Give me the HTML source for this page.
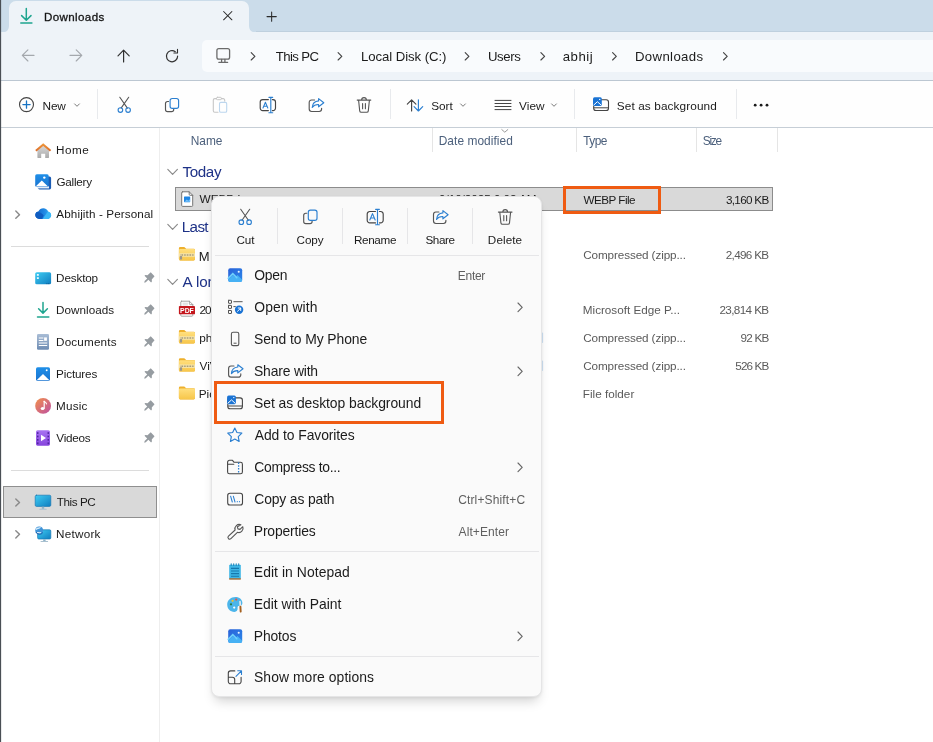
<!DOCTYPE html>
<html>
<head>
<meta charset="utf-8">
<title>Downloads</title>
<style>
*{box-sizing:border-box;margin:0;padding:0}
html,body{width:933px;height:742px;overflow:hidden;background:#fff}
body{font-family:"Liberation Sans",sans-serif;color:#1b1b1b;position:relative;-webkit-font-smoothing:antialiased}
.abs{position:absolute}
.t{position:absolute;white-space:nowrap;line-height:1}
svg{position:absolute;overflow:visible}
/* title bar */
#titlebar{left:0;top:0;width:933px;height:32px;background:#cbdcea}
#tab{left:9px;top:1px;width:240px;height:31px;background:#eef3f8;border-radius:7px 7px 0 0}
#tabl{left:3px;top:26px;width:6px;height:6px;background:radial-gradient(circle at 0 0,rgba(0,0,0,0) 6px,#eef3f8 6.5px)}
#tabr{left:249px;top:26px;width:6px;height:6px;background:radial-gradient(circle at 100% 0,rgba(0,0,0,0) 6px,#eef3f8 6.5px)}
#navbar{left:0;top:32px;width:933px;height:48px;background:#eef3f8}
#addr{left:202px;top:40px;width:740px;height:32px;background:#f9fbfd;border-radius:5px}
#line1{left:0;top:80px;width:933px;height:1px;background:#bcc7d2}
#toolbar{left:0;top:81px;width:933px;height:46px;background:#fefefe}
#line2{left:0;top:127px;width:933px;height:1px;background:#c6ced6}
#leftedge{left:0;top:0;width:1px;height:742px;background:#4a4f55}
#leftedge2{left:1px;top:0;width:1px;height:742px;background:rgba(90,96,104,.14)}
.vsep{position:absolute;width:1px;background:#e8eaed}
.bc{font-size:13.2px;top:50px;color:#1b1b1b}
.tb{font-size:11.8px;top:100.5px;color:#1b1b1b}
.sb{font-size:11.7px;left:56.5px;color:#1b1b1b}
.hd{font-size:11.9px;top:135.5px;color:#4c607c}
.gp{font-size:15.2px;color:#1e3287;left:182px}
.fn{font-size:11.8px;left:199px;color:#1b1b1b}
.ty{font-size:11.7px;left:583px;color:#5a5a5a}
.sz{font-size:11.7px;color:#5a5a5a;text-align:right;right:164.5px}
.hsep{position:absolute;left:11px;width:138px;height:1px;background:#dcdcdc}
/* menu */
#menu{left:211px;top:196px;width:330.5px;height:500.5px;background:#fafafa;border-radius:8px;border:1px solid #e5e5e6;box-shadow:0 8px 12px -4px rgba(0,0,0,.18),0 1px 3px rgba(0,0,0,.06)}
.mi{font-size:13.9px;left:254px;color:#1b1b1b}
.mk{font-size:12px;left:458px;color:#5f5f5f}
.ml{font-size:11.7px;color:#1b1b1b;text-align:center;width:65px;top:234px}
.msep{position:absolute;left:214.5px;width:324px;height:1px;background:#e6e6e8}
.obox{position:absolute;border:3px solid #ef5b12}
</style>
</head>
<body>
<div id="root" style="position:absolute;left:0;top:0;width:933px;height:742px;will-change:transform;background:#fff">
<!-- chrome -->
<div id="titlebar" class="abs"></div>
<svg class="full" width="933" height="742" viewBox="0 0 933 742" style="left:0;top:0"><path d="M2 32.500c4.500 0 7-2.500 7-7v-17.500a7 7 0 0 1 7-7h226a7 7 0 0 1 7 7v17.500c0 4.500 2.500 7 7 7z" fill="#eef3f8"/></svg>
<div class="abs" style="left:256px;top:31px;width:677px;height:1px;background:#bfd0de"></div>
<div id="navbar" class="abs"></div>
<div id="addr" class="abs"></div>
<div id="line1" class="abs"></div>
<div id="toolbar" class="abs"></div>
<div id="line2" class="abs"></div>

<!-- TAB -->
<div class="t" style="left:43.9px;top:11px;font-size:11.6px;color:#151515;-webkit-text-stroke:0.3px #151515;letter-spacing:0.380px">Downloads</div>

<!-- BREADCRUMB TEXT -->
<div class="t bc" style="left:275.7px;letter-spacing:-0.584px">This PC</div>
<div class="t bc" style="left:360.9px;letter-spacing:-0.062px">Local Disk (C:)</div>
<div class="t bc" style="left:488.0px;letter-spacing:-0.409px">Users</div>
<div class="t bc" style="left:562.8px;letter-spacing:0.481px">abhij</div>
<div class="t bc" style="left:634.9px;letter-spacing:0.369px">Downloads</div>

<!-- TOOLBAR TEXT -->
<div class="t tb" style="left:42.6px;letter-spacing:-0.155px">New</div>
<div class="t tb" style="left:431.2px;letter-spacing:-0.047px">Sort</div>
<div class="t tb" style="left:519.1px;letter-spacing:0.014px">View</div>
<div class="t tb" style="left:616.8px;letter-spacing:0.102px">Set as background</div>
<div class="vsep" style="left:97px;top:89px;height:30px"></div>
<div class="vsep" style="left:390px;top:89px;height:30px"></div>
<div class="vsep" style="left:574px;top:89px;height:30px"></div>
<div class="vsep" style="left:736px;top:89px;height:30px"></div>

<!-- SIDEBAR -->
<div class="abs" style="left:159px;top:128px;width:1px;height:614px;background:#eeeeee"></div>
<div class="t sb" style="left:56.1px;top:144px;letter-spacing:0.471px">Home</div>
<div class="t sb" style="left:56.5px;top:176px;letter-spacing:-0.255px">Gallery</div>
<div class="t sb" style="left:56.3px;top:208px;letter-spacing:0.113px">Abhijith - Personal</div>
<div class="hsep" style="top:246px"></div>
<div class="t sb" style="left:56.1px;top:272px;letter-spacing:-0.148px">Desktop</div>
<div class="t sb" style="left:56.1px;top:304px;letter-spacing:0.021px">Downloads</div>
<div class="t sb" style="left:56.1px;top:336px;letter-spacing:0.159px">Documents</div>
<div class="t sb" style="left:56.1px;top:368px;letter-spacing:-0.148px">Pictures</div>
<div class="t sb" style="left:56.1px;top:400px;letter-spacing:0.167px">Music</div>
<div class="t sb" style="left:56.3px;top:432px;letter-spacing:-0.246px">Videos</div>
<div class="hsep" style="top:470px"></div>
<div class="abs" style="left:3px;top:486px;width:154px;height:32px;background:#d9d9d9;border:1px solid #8f8f8f"></div>
<div class="t sb" style="left:56.7px;top:496px;letter-spacing:-0.413px">This PC</div>
<div class="t sb" style="left:56.1px;top:528px;letter-spacing:0.237px">Network</div>

<!-- FILE LIST -->
<div class="t hd" style="left:190.8px;letter-spacing:-0.040px">Name</div>
<div class="t hd" style="left:438.7px;letter-spacing:0.069px">Date modified</div>
<div class="t hd" style="left:583.3px;letter-spacing:-0.594px">Type</div>
<div class="t hd" style="left:702.7px;letter-spacing:-1.214px">Size</div>
<div class="vsep" style="left:432px;top:128px;height:24px;background:#e5e5e5"></div>
<div class="vsep" style="left:576px;top:128px;height:24px;background:#e5e5e5"></div>
<div class="vsep" style="left:696px;top:128px;height:24px;background:#e5e5e5"></div>
<div class="vsep" style="left:776.5px;top:128px;height:24px;background:#e5e5e5"></div>

<div class="t gp" style="left:182.4px;top:163.5px;letter-spacing:-0.358px">Today</div>
<div class="abs" style="left:175px;top:187px;width:598px;height:24px;background:#d9d9d9;border:1px solid #8c8c8c"></div>
<div class="t fn" style="left:199.5px;top:194px">WEBP Image</div>
<div class="t" style="left:439px;top:192.5px;font-size:11.7px;color:#1b1b1b;letter-spacing:-0.033px">9/10/2025 9:02 AM</div>
<div class="t ty" style="left:583.6px;top:193.5px;color:#1b1b1b;letter-spacing:-0.537px">WEBP File</div>
<div class="t sz" style="top:193.5px;color:#1b1b1b;letter-spacing:-0.699px">3,160 KB</div>

<div class="t gp" style="left:181.7px;top:218.5px;letter-spacing:-0.6px">Last week</div>
<div class="t fn" style="left:198.8px;top:249.5px;font-size:13px;letter-spacing:3.5px">Main</div>
<div class="t ty" style="left:583.2px;top:248.5px;letter-spacing:-0.099px">Compressed (zipp...</div>
<div class="t sz" style="top:248.5px;letter-spacing:-0.671px">2,496 KB</div>

<div class="t gp" style="left:182.6px;top:273.5px;letter-spacing:-0.1px">A long time ago</div>
<div class="t fn" style="left:199.4px;top:304.5px;letter-spacing:-1px">2024</div>
<div class="t ty" style="left:582.8px;top:304px">Microsoft Edge P...</div>
<div class="t sz" style="top:304px;letter-spacing:-0.612px">23,814 KB</div>
<div class="t fn" style="left:199.2px;top:332.5px">photos</div>
<div class="t ty" style="left:583.2px;top:332px;letter-spacing:-0.099px">Compressed (zipp...</div>
<div class="t sz" style="top:332px;letter-spacing:-0.786px">92 KB</div>
<div class="t fn" style="left:199.5px;top:360.5px">ViVeTool</div>
<div class="t ty" style="left:583.2px;top:360px;letter-spacing:-0.099px">Compressed (zipp...</div>
<div class="t sz" style="top:360px;letter-spacing:-0.849px">526 KB</div>
<div class="t fn" style="left:198.7px;top:388.5px">Pictures</div>
<div class="t ty" style="left:582.8px;top:388px;letter-spacing:0.017px">File folder</div>

<!-- ICONS-CHROME -->
<svg class="full" width="933" height="742" viewBox="0 0 933 742" style="left:0;top:0" fill="none" stroke-linecap="round" stroke-linejoin="round">
<!-- tab icon -->
<g stroke="#1fa58f" stroke-width="1.5"><path d="M26.3 8.6V20M21.6 15.6l4.7 4.7 4.7-4.7M20.8 23.1h11.1"/></g>
<g stroke="#2b2b2b" stroke-width="1.05"><path d="M223.6 11.5l8.3 8.3M231.9 11.5l-8.3 8.3"/><path d="M267 16.6h9.3M271.65 11.9v9.4"/></g>
<!-- nav -->
<g stroke="#a4a8ad" stroke-width="1.15"><path d="M34 55.4H22.4M27.9 49.8l-5.6 5.6 5.6 5.6"/><path d="M70 55.4h11.7M76.2 49.8l5.6 5.6-5.6 5.6"/></g>
<g stroke="#303030" stroke-width="1.2"><path d="M123.6 62V50.2M118 55.8l5.6-5.6 5.6 5.6"/>
<path d="M177.6 56.2a5.6 5.6 0 1 1-2.3-4.55"/><path d="M177.5 49.4v3.6h-3.6" stroke-width="1.1"/></g>
<g stroke="#6b6b6b" stroke-width="1.3"><rect x="216.9" y="48.7" width="12.7" height="10.4" rx="1.9"/><path d="M218.900 62.400h8.700M221.600 59.300v3M224.900 59.300v3"/></g>
<g stroke="#444" stroke-width="1.15"><path d="M251.2 52.6l3.7 3.7-3.7 3.7"/><path d="M338.09999999999997 52.6l3.7 3.7-3.7 3.7"/><path d="M465.2 52.6l3.7 3.7-3.7 3.7"/><path d="M540.9000000000001 52.6l3.7 3.7-3.7 3.7"/><path d="M612.6 52.6l3.7 3.7-3.7 3.7"/><path d="M723.5 52.6l3.7 3.7-3.7 3.7"/></g>
<!-- toolbar -->
<circle cx="26.5" cy="104.6" r="7" stroke="#444" stroke-width="1.1"/>
<path d="M22.9 104.6h7.2M26.5 101v7.2" stroke="#1773c4" stroke-width="1.3"/>
<g stroke="#7a7a7a" stroke-width="1"><path d="M74.6 103.9l2.4 2.4 2.4-2.4"/><path d="M460.6 103.9l2.4 2.4 2.4-2.4"/><path d="M551.6 103.9l2.4 2.4 2.4-2.4"/></g>
<!-- cut -->
<path d="M119.8 97.3l7.6 10.8M128.7 97.3l-7.6 10.8" stroke="#555" stroke-width="1.1"/>
<circle cx="120.4" cy="110.1" r="2.3" stroke="#2b7fd0" stroke-width="1.1"/><circle cx="128.1" cy="110.1" r="2.3" stroke="#2b7fd0" stroke-width="1.1"/>
<!-- copy -->
<path d="M168.6 101.5h-1a2.1 2.1 0 0 0-2.1 2.1v5.9a2.1 2.1 0 0 0 2.1 2.1h4a2.1 2.1 0 0 0 2.1-2.1v-.6" stroke="#555" stroke-width="1.15"/>
<rect x="170.1" y="98.5" width="8.5" height="9.9" rx="2.1" stroke="#2b7fd0" stroke-width="1.15"/>
<!-- paste disabled -->
<path d="M218 112.2h-3.2a1.5 1.5 0 0 1-1.5-1.5v-10.6a1.5 1.5 0 0 1 1.5-1.5h1.6M221.4 98.6h1.8a1.5 1.5 0 0 1 1.5 1.5v1" stroke="#c6c6c6" stroke-width="1.1"/>
<rect x="216.4" y="97.3" width="5" height="2.4" rx="1.1" stroke="#c6c6c6" stroke-width="1"/>
<rect x="219.5" y="102.4" width="7.2" height="9.8" rx="1.3" stroke="#bcd6ee" stroke-width="1.1"/>
<!-- rename -->
<path d="M268.4 99.6h-5.7a2.5 2.5 0 0 0-2.5 2.5v6a2.5 2.5 0 0 0 2.5 2.5h5.7M272.4 99.6h.6a2.5 2.5 0 0 1 2.5 2.5v6a2.5 2.5 0 0 1-2.5 2.5h-.6" stroke="#444" stroke-width="1.15"/>
<path d="M270.800 97.400v15.200M268.900 97.300h3.800M268.900 112.700h3.800" stroke="#2b7fd0" stroke-width="1.15"/>
<path d="M263 108l2.4-5.8 2.4 5.8M263.8 106.2h3.2" stroke="#2b7fd0" stroke-width="1.05"/>
<!-- share -->
<path d="M314.6 100h-3a2.4 2.4 0 0 0-2.4 2.4v6.7a2.4 2.4 0 0 0 2.4 2.4h7.6a2.4 2.4 0 0 0 2.4-2.4v-.9" stroke="#555" stroke-width="1.15"/>
<path d="M318.6 98.6l5.2 4.1-5.2 4.1v-2.3c-3-.1-5 .9-6.4 3 .3-3.7 2.6-6.3 6.4-6.6z" stroke="#2b7fd0" stroke-width="1.1"/>
<!-- delete -->
<path d="M357.2 100.1h13.6M361.6 100a2.4 2.4 0 0 1 4.8 0M358.6 100.3l1.1 10.6a1.6 1.6 0 0 0 1.6 1.4h5.4a1.6 1.6 0 0 0 1.6-1.4l1.1-10.6M362.6 103.6v5.2M365.4 103.6v5.2" stroke="#555" stroke-width="1.1"/>
<!-- sort -->
<path d="M411.6 111V100M407.3 104.2l4.3-4.3 4.3 4.3" stroke="#444" stroke-width="1.15"/>
<path d="M418.4 99.8v11M414.1 106.7l4.3 4.3 4.3-4.3" stroke="#2b7fd0" stroke-width="1.15"/>
<!-- view -->
<path d="M495 100.4h16M495 103.5h16M495 106.5h16M495 109.6h16" stroke="#444" stroke-width="1"/>
<!-- set as bg -->
<rect x="593.7" y="99.7" width="14.8" height="10.8" rx="2.3" stroke="#444" stroke-width="1.1"/>
<path d="M594 107.8h14.3" stroke="#444" stroke-width="1"/>
<rect x="593" y="97.2" width="8.8" height="8.8" rx="1.5" fill="#1a73d4"/>
<path d="M593.8 105l3.6-3.3 3.6 3.3" stroke="#fff" stroke-width="1"/><circle cx="599.7" cy="99.4" r=".7" fill="#fff"/>
<!-- dots -->
<g fill="#1b1b1b"><circle cx="755.2" cy="105.2" r="1.4"/><circle cx="761.1" cy="105.2" r="1.4"/><circle cx="767" cy="105.2" r="1.4"/></g>
</svg>

<!-- ICONS-SIDEBAR -->
<svg class="full" width="933" height="742" viewBox="0 0 933 742" style="left:0;top:0" fill="none" stroke-linecap="round" stroke-linejoin="round">
<defs>
<linearGradient id="gTeal" x1="0" y1="0" x2="1" y2="1"><stop offset="0" stop-color="#3fcdf3"/><stop offset="1" stop-color="#0f7dc0"/></linearGradient>
<linearGradient id="gBlue" x1="0" y1="0" x2="0" y2="1"><stop offset="0" stop-color="#1f8fe8"/><stop offset="1" stop-color="#1a74d0"/></linearGradient>
<linearGradient id="gMus" x1="0" y1="0" x2="1" y2="1"><stop offset="0" stop-color="#f3914a"/><stop offset="1" stop-color="#bd4fa3"/></linearGradient>
<linearGradient id="gVid" x1="0" y1="0" x2="0" y2="1"><stop offset="0" stop-color="#a873f2"/><stop offset="1" stop-color="#8644dc"/></linearGradient>
<linearGradient id="gDoc" x1="0" y1="0" x2="0" y2="1"><stop offset="0" stop-color="#a9bdd6"/><stop offset="1" stop-color="#6e8cb3"/></linearGradient>
<linearGradient id="gHome" x1="0" y1="0" x2="0" y2="1"><stop offset="0" stop-color="#d8d8d8"/><stop offset="1" stop-color="#a9a9a9"/></linearGradient>
<linearGradient id="gRoof" x1="0" y1="0" x2="0" y2="1"><stop offset="0" stop-color="#f09a3c"/><stop offset="1" stop-color="#d96a2a"/></linearGradient>
<linearGradient id="gCloud" x1="0" y1="0" x2="1" y2="0"><stop offset="0" stop-color="#0f62c4"/><stop offset=".55" stop-color="#1e86e3"/><stop offset="1" stop-color="#35b2f2"/></linearGradient>
</defs>
<!-- home -->
<path d="M37.4 150.6l5.8-4.9 5.8 4.9v6.6a.9.9 0 0 1-.9.9h-2.9v-4.4h-4v4.4h-2.9a.9.9 0 0 1-.9-.9z" fill="url(#gHome)"/>
<path d="M43.2 143.2l-8 6.9 1.3 1.5 6.7-5.7 6.7 5.7 1.3-1.5z" fill="url(#gRoof)"/>
<!-- gallery -->
<rect x="38" y="176.4" width="13.1" height="13" rx="1.6" fill="#1b5cb4"/>
<path d="M37.2 186.2h11.8v2.2h-11.8z" fill="#e3ecf8"/>
<rect x="35.2" y="174.3" width="13.5" height="12.6" rx="1.6" fill="url(#gBlue)"/>
<path d="M35.6 186.5l6.2-6 6.2 6z" fill="#fff"/><circle cx="44.300" cy="177.600" r="1.200" fill="#fff"/>
<!-- onedrive -->
<path d="M39.3 218.9c-2.3 0-4-1.7-4-3.8 0-2 1.4-3.5 3.2-3.8.9-1.8 2.7-3 4.8-3 2.3 0 4.200 1.400 4.900 3.400 1.700.400 2.900 1.800 2.900 3.500 0 2-1.600 3.700-3.600 3.700z" fill="url(#gCloud)"/>
<path d="M42.600 218.900l5.300-7.400c1.900.300 3.200 1.800 3.200 3.700 0 2-1.600 3.700-3.600 3.700z" fill="#3bb8f6"/>
<path d="M39.300 218.900c-2.300 0-4-1.700-4-3.800 0-1.300.6-2.400 1.500-3.100 2.500-.5 5 .8 6.800 3.300l-1.500 3.600z" fill="#0f5cc0"/>
<!-- desktop -->
<rect x="35.2" y="272.2" width="15.9" height="12.1" rx="1.6" fill="url(#gTeal)"/>
<rect x="36.900" y="274" width="1.900" height="1.800" fill="#e8f8ff"/><rect x="36.900" y="277.200" width="1.900" height="1.800" fill="#e8f8ff"/><path d="M46.400 283.600h3.200" stroke="#0d5f96" stroke-width="1" stroke-dasharray=".9 .6" stroke-linecap="butt"/>
<!-- downloads -->
<path d="M43 302.400v10.600M38.600 308.700l4.400 4.400 4.400-4.400M37.500 317.100h11.300" stroke="#1fa58f" stroke-width="1.500"/>
<!-- documents -->
<rect x="37" y="334" width="12" height="15.800" rx="1.300" fill="url(#gDoc)"/>
<path d="M39.200 338h3.800M39.200 340.500h3.800M39.200 343h7.600M39.200 345.500h7.600" stroke="#fff" stroke-width="1"/><rect x="44.100" y="337.400" width="2.800" height="3.400" fill="#fff"/>
<!-- pictures -->
<rect x="36" y="367.200" width="14" height="13.700" rx="1.600" fill="url(#gBlue)"/>
<path d="M36.600 380.300l6.400-6.300 6.400 6.300z" fill="#fff"/><circle cx="46.700" cy="370.300" r=".95" fill="#fff"/>
<!-- music -->
<circle cx="43.100" cy="405.900" r="7.900" fill="url(#gMus)"/>
<path d="M44.200 401.300v6.900" stroke="#fff" stroke-width="1.200"/><ellipse cx="42.600" cy="408.500" rx="1.900" ry="1.500" fill="#fff"/><path d="M44.200 401.300c.8 1 2 1.200 2.300 2.600" stroke="#fff" stroke-width="1.100"/>
<!-- videos -->
<rect x="36" y="430.300" width="14" height="15.400" rx="1.600" fill="url(#gVid)"/>
<g fill="#4f25a0"><rect x="37" y="432.200" width="1.500" height="1.700"/><rect x="37" y="435.600" width="1.500" height="1.700"/><rect x="37" y="439" width="1.500" height="1.700"/><rect x="37" y="442.400" width="1.500" height="1.700"/><rect x="47.500" y="432.200" width="1.500" height="1.700"/><rect x="47.500" y="435.600" width="1.500" height="1.700"/><rect x="47.500" y="439" width="1.500" height="1.700"/><rect x="47.500" y="442.400" width="1.500" height="1.700"/></g>
<path d="M41 434.800v6.400l5-3.200z" fill="#fff"/>
<!-- this pc -->
<rect x="35.200" y="495.200" width="15.600" height="11.200" rx="1.300" fill="url(#gTeal)" stroke="#1878b4" stroke-width=".7"/>
<rect x="41.800" y="506.700" width="2.400" height="2.200" fill="#8fb3c9"/><rect x="39.300" y="508.800" width="7.400" height="1" rx=".5" fill="#a9c0cf"/>
<!-- network -->
<rect x="37.600" y="529.800" width="13.200" height="9.200" rx="1.200" fill="url(#gTeal)" stroke="#1878b4" stroke-width=".7"/>
<rect x="43.200" y="539.300" width="2.400" height="1.900" fill="#8fb3c9"/><rect x="40.500" y="541" width="7.600" height="1" rx=".5" fill="#a9c0cf"/>
<circle cx="39.200" cy="530.300" r="3.900" fill="#3f93d8"/><path d="M36.400 529.200c1.300-1.600 2.600-.4 3.600-1.600M37.600 532.600c1.100-.3 1.700.5 2.900.1" stroke="#d6ecfb" stroke-width="1.300"/><path d="M36 532.300a3.900 3.900 0 0 0 6.600.6" stroke="#1d5fa9" stroke-width="1"/>
<!-- chevrons -->
<g stroke="#8a8a8a" stroke-width="1.450"><path d="M15.800 211.100l3.700 3.600-3.700 3.600"/><path d="M15.800 498.900l3.700 3.600-3.700 3.600"/><path d="M15.800 530.700l3.700 3.600-3.700 3.600"/></g>
<g transform="translate(148.6 278.3) rotate(45) scale(1.04)"><path d="M-2.600-5.500h5.200l.3 4.100 1.600 1.400v1.100h-3.700v3.500l-.8 1.300-.8-1.300v-3.500h-3.700v-1.100l1.600-1.400z" fill="#969ca1"/></g><g transform="translate(148.6 310.3) rotate(45) scale(1.04)"><path d="M-2.600-5.500h5.200l.3 4.100 1.600 1.400v1.100h-3.700v3.500l-.8 1.300-.8-1.300v-3.500h-3.700v-1.100l1.600-1.400z" fill="#969ca1"/></g><g transform="translate(148.6 342.3) rotate(45) scale(1.04)"><path d="M-2.600-5.500h5.200l.3 4.100 1.600 1.400v1.100h-3.700v3.500l-.8 1.300-.8-1.300v-3.500h-3.700v-1.100l1.600-1.400z" fill="#969ca1"/></g><g transform="translate(148.6 374.3) rotate(45) scale(1.04)"><path d="M-2.600-5.500h5.200l.3 4.100 1.600 1.400v1.100h-3.700v3.500l-.8 1.300-.8-1.300v-3.500h-3.700v-1.100l1.600-1.400z" fill="#969ca1"/></g><g transform="translate(148.6 406.3) rotate(45) scale(1.04)"><path d="M-2.600-5.500h5.200l.3 4.100 1.600 1.400v1.100h-3.700v3.500l-.8 1.300-.8-1.300v-3.500h-3.700v-1.100l1.600-1.400z" fill="#969ca1"/></g><g transform="translate(148.6 438.3) rotate(45) scale(1.04)"><path d="M-2.600-5.500h5.200l.3 4.100 1.600 1.400v1.100h-3.700v3.500l-.8 1.300-.8-1.300v-3.500h-3.700v-1.100l1.600-1.400z" fill="#969ca1"/></g>
</svg>

<!-- ICONS-FILES -->
<svg class="full" width="933" height="742" viewBox="0 0 933 742" style="left:0;top:0" fill="none" stroke-linecap="round" stroke-linejoin="round">
<defs><linearGradient id="gFold" x1="0" y1="0" x2="0" y2="1"><stop offset="0" stop-color="#ffdf7e"/><stop offset="1" stop-color="#f7c64a"/></linearGradient></defs>
<g stroke="#8a8a8a" stroke-width="1.150"><path d="M167.800 169.400l4.800 4.900 4.800-4.900"/><path d="M167.800 224.400l4.800 4.900 4.800-4.900"/><path d="M167.800 279.400l4.800 4.900 4.800-4.900"/><path d="M501.800 129.600l3 2.600 3-2.600" stroke="#9a9a9a" stroke-width="1"/></g>
<!-- webp file -->
<path d="M182.600 191.800h6.600l3.500 3.500v10.200a.9.900 0 0 1-.9.900h-9.200a.9.900 0 0 1-.9-.9v-12.800a.9.900 0 0 1 .9-.9z" fill="#fff" stroke="#757575" stroke-width="1"/>
<path d="M189.200 191.800v2.600a.9.900 0 0 0 .9.900h2.600" stroke="#757575" stroke-width="1"/>
<rect x="184" y="196.400" width="6.200" height="5.800" rx=".6" fill="#1f86e4"/><path d="M184.400 201.800l2.400-2.400 1.500 1.400 1.700-1.600v2.600z" fill="#7cc4f8"/>
<g transform="translate(178.9 247)">
<path d="M0 1.300a1.300 1.300 0 0 1 1.300-1.300h4.100l1.900 1.800h7.500a1.300 1.300 0 0 1 1.300 1.300v9a1.300 1.300 0 0 1-1.300 1.300h-13.500a1.300 1.300 0 0 1-1.300-1.300z" fill="#eeb02c"/>
<path d="M0 3.300a1.300 1.300 0 0 1 1.300-1.300h13.500a1.300 1.300 0 0 1 1.300 1.300v8.800a1.300 1.300 0 0 1-1.300 1.300h-13.500a1.300 1.300 0 0 1-1.300-1.300z" fill="url(#gFold)"/>
<rect x="0" y="6.200" width="16.100" height="3.600" fill="#f6e3a6"/>
<path d="M1.800 8h13.200" stroke="#857f6c" stroke-width="1.500" stroke-dasharray=".7 .9" stroke-linecap="butt"/>
<rect x="1" y="9" width="2.200" height="3.600" rx=".6" fill="#9a958a"/>
</g>
<!-- pdf -->
<path d="M181.600 301.200h7.800l3.400 3.400v10.800a.8.800 0 0 1-.8.800h-10.400a.8.800 0 0 1-.8-.8v-13.400a.8.800 0 0 1 .8-.8z" fill="#fff" stroke="#9a9a9a" stroke-width=".9"/>
<path d="M189.400 301.200v2.600a.8.800 0 0 0 .8.800h2.600" stroke="#9a9a9a" stroke-width=".9"/>
<path d="M183 303.200h4.500M183 304.900h4.500" stroke="#c9c9c9" stroke-width=".8"/>
<rect x="178.900" y="305.900" width="16.100" height="8.400" rx=".9" fill="#c4161c"/>
<text x="186.950" y="312.600" font-family="Liberation Sans, sans-serif" font-weight="bold" font-size="6.900" fill="#fff" text-anchor="middle" stroke="none">PDF</text>
<g transform="translate(178.9 330)">
<path d="M0 1.300a1.300 1.300 0 0 1 1.300-1.300h4.100l1.900 1.800h7.500a1.300 1.300 0 0 1 1.300 1.300v9a1.300 1.300 0 0 1-1.300 1.300h-13.500a1.300 1.300 0 0 1-1.300-1.300z" fill="#eeb02c"/>
<path d="M0 3.300a1.300 1.300 0 0 1 1.300-1.300h13.500a1.300 1.300 0 0 1 1.300 1.300v8.800a1.300 1.300 0 0 1-1.300 1.300h-13.500a1.300 1.300 0 0 1-1.300-1.300z" fill="url(#gFold)"/>
<rect x="0" y="6.200" width="16.100" height="3.600" fill="#f6e3a6"/>
<path d="M1.800 8h13.200" stroke="#857f6c" stroke-width="1.500" stroke-dasharray=".7 .9" stroke-linecap="butt"/>
<rect x="1" y="9" width="2.200" height="3.600" rx=".6" fill="#9a958a"/>
</g>
<g transform="translate(178.9 358.2)">
<path d="M0 1.300a1.300 1.300 0 0 1 1.300-1.300h4.100l1.900 1.800h7.500a1.300 1.300 0 0 1 1.300 1.300v9a1.300 1.300 0 0 1-1.300 1.300h-13.500a1.300 1.300 0 0 1-1.300-1.300z" fill="#eeb02c"/>
<path d="M0 3.300a1.300 1.300 0 0 1 1.300-1.300h13.500a1.300 1.300 0 0 1 1.300 1.300v8.800a1.300 1.300 0 0 1-1.300 1.300h-13.500a1.300 1.300 0 0 1-1.300-1.300z" fill="url(#gFold)"/>
<rect x="0" y="6.200" width="16.100" height="3.600" fill="#f6e3a6"/>
<path d="M1.800 8h13.200" stroke="#857f6c" stroke-width="1.500" stroke-dasharray=".7 .9" stroke-linecap="butt"/>
<rect x="1" y="9" width="2.200" height="3.600" rx=".6" fill="#9a958a"/>
</g>
<!-- folder -->
<g transform="translate(178.900 386.400)">
<path d="M0 1.300a1.300 1.300 0 0 1 1.300-1.300h4.100l1.900 1.800h7.500a1.300 1.300 0 0 1 1.300 1.300v8.600a1.300 1.300 0 0 1-1.300 1.300h-13.500a1.300 1.300 0 0 1-1.300-1.300z" fill="#eeb02c"/>
<path d="M0 3.400a1.300 1.300 0 0 1 1.300-1.300h13.500a1.300 1.300 0 0 1 1.300 1.300v8.100a1.300 1.300 0 0 1-1.300 1.300h-13.500a1.300 1.300 0 0 1-1.300-1.300z" fill="url(#gFold)"/>
</g>
<path d="M542.500 333v9.300M542.500 361v9.300" stroke="#cfe2f4" stroke-width="1.200"/>
</svg>

<!-- orange box 1 -->
<div class="obox" style="left:562.5px;top:186.200px;width:98.5px;height:28px"></div>

<!-- MENU -->
<div id="menu" class="abs"></div>
<div class="t ml" style="left:213px;letter-spacing:-0.052px">Cut</div>
<div class="t ml" style="left:277.5px;letter-spacing:-0.099px">Copy</div>
<div class="t ml" style="left:342.5px;letter-spacing:-0.338px">Rename</div>
<div class="t ml" style="left:407.5px;letter-spacing:-0.426px">Share</div>
<div class="t ml" style="left:472.5px;letter-spacing:0.081px">Delete</div>
<div class="vsep" style="left:277.1px;top:208px;height:36px;background:#e6e6e8"></div>
<div class="vsep" style="left:342px;top:208px;height:36px;background:#e6e6e8"></div>
<div class="vsep" style="left:407px;top:208px;height:36px;background:#e6e6e8"></div>
<div class="vsep" style="left:472.1px;top:208px;height:36px;background:#e6e6e8"></div>
<div class="msep" style="top:255px"></div>
<div class="t mi" style="left:254.3px;top:269px;letter-spacing:-0.228px">Open</div><div class="t mk" style="left:457.8px;top:270px;letter-spacing:-0.297px">Enter</div>
<div class="t mi" style="left:254.3px;top:301px;letter-spacing:0.069px">Open with</div>
<div class="t mi" style="left:254.0px;top:333px;letter-spacing:-0.073px">Send to My Phone</div>
<div class="t mi" style="left:254.0px;top:365px;letter-spacing:-0.171px">Share with</div>
<div class="t mi" style="left:254.0px;top:397px;letter-spacing:-0.048px">Set as desktop background</div>
<div class="t mi" style="left:254.8px;top:429px;letter-spacing:-0.084px">Add to Favorites</div>
<div class="t mi" style="left:254.3px;top:461px;letter-spacing:-0.302px">Compress to...</div>
<div class="t mi" style="left:254.3px;top:493px;letter-spacing:-0.142px">Copy as path</div><div class="t mk" style="left:458.2px;top:494px;letter-spacing:0.140px">Ctrl+Shift+C</div>
<div class="t mi" style="left:253.8px;top:525px;letter-spacing:-0.157px">Properties</div><div class="t mk" style="left:458.6px;top:526px;letter-spacing:0.087px">Alt+Enter</div>
<div class="msep" style="top:551px"></div>
<div class="t mi" style="left:253.8px;top:566px;letter-spacing:0.073px">Edit in Notepad</div>
<div class="t mi" style="left:253.8px;top:598px;letter-spacing:-0.031px">Edit with Paint</div>
<div class="t mi" style="left:253.8px;top:630px;letter-spacing:-0.130px">Photos</div>
<div class="msep" style="top:656px"></div>
<div class="t mi" style="left:254.0px;top:671px;letter-spacing:0.068px">Show more options</div>

<!-- ICONS-MENU -->
<svg class="full" width="933" height="742" viewBox="0 0 933 742" style="left:0;top:0" fill="none" stroke-linecap="round" stroke-linejoin="round">
<defs><linearGradient id="gPh" x1="0" y1="0" x2="1" y2="1"><stop offset="0" stop-color="#2a62d8"/><stop offset="1" stop-color="#2b86ea"/></linearGradient></defs>
<!-- top row: cut -->
<path d="M240.700 209.300l7.700 10.900M249.700 209.300l-7.700 10.900" stroke="#555" stroke-width="1.100"/>
<circle cx="241.300" cy="222.200" r="2.300" stroke="#2b7fd0" stroke-width="1.100"/><circle cx="249.100" cy="222.200" r="2.300" stroke="#2b7fd0" stroke-width="1.100"/>
<!-- copy -->
<path d="M306.800 213.200h-1a2.100 2.100 0 0 0-2.100 2.100v6.200a2.100 2.100 0 0 0 2.100 2.100h4.200a2.100 2.100 0 0 0 2.100-2.100v-.6" stroke="#555" stroke-width="1.150"/>
<rect x="308.300" y="210.100" width="8.700" height="10.200" rx="2.100" stroke="#2b7fd0" stroke-width="1.150"/>
<!-- rename -->
<g transform="translate(2.1 0)"><path d="M373.400 211.500h-5.700a2.600 2.600 0 0 0-2.600 2.600v6.200a2.600 2.600 0 0 0 2.600 2.600h5.700M377.400 211.500h1.100a2.600 2.600 0 0 1 2.600 2.600v6.200a2.600 2.600 0 0 1-2.600 2.600h-1.100" stroke="#444" stroke-width="1.150"/>
<path d="M375.400 209.400v15.200M373.500 209.300h3.800M373.500 224.700h3.800" stroke="#2b7fd0" stroke-width="1.150"/>
<path d="M367.700 220l2.700-6.400 2.700 6.400M368.600 218h3.600" stroke="#2b7fd0" stroke-width="1.100"/></g>
<!-- share -->
<path d="M438.900 212h-3a2.400 2.400 0 0 0-2.400 2.400v6.700a2.400 2.400 0 0 0 2.400 2.400h7.600a2.400 2.400 0 0 0 2.400-2.400v-.9" stroke="#555" stroke-width="1.150"/>
<path d="M442.900 210.600l5.200 4.100-5.200 4.100v-2.300c-3-.1-5 .9-6.400 3 .3-3.700 2.600-6.300 6.400-6.600z" stroke="#2b7fd0" stroke-width="1.100"/>
<!-- delete -->
<path d="M498.400 212.100h13.600M502.800 212a2.400 2.400 0 0 1 4.800 0M499.800 212.300l1.100 10.600a1.600 1.600 0 0 0 1.600 1.400h5.400a1.600 1.600 0 0 0 1.600-1.400l1.100-10.600M503.800 215.600v5.200M506.600 215.600v5.200" stroke="#555" stroke-width="1.100"/>
<!-- open (photos) -->
<g><rect x="228.200" y="268.200" width="14" height="13.900" rx="2" fill="url(#gPh)"/><path d="M228.200 279.600l4.600-4.700 2.400 2.400 2.300-2.300 4.700 4.700v.4a2 2 0 0 1-2 2h-10a2 2 0 0 1-2-2z" fill="#46b1f4"/><path d="M228.200 278.200l4.600-4.600 4 4.100" stroke="#6fd0fb" stroke-width="1.600" stroke-linejoin="miter"/><circle cx="238.700" cy="271.700" r="1.050" fill="#e8f3ff"/></g>
<!-- open with -->
<g stroke="#555" stroke-width="1"><rect x="228.500" y="300.300" width="3" height="3" rx=".3"/><rect x="228.500" y="305.400" width="3" height="3" rx=".3"/><rect x="228.500" y="310.500" width="3" height="3" rx=".3"/><path d="M233.800 301.700h8.400M233.800 306.600h1.600"/></g>
<circle cx="239.100" cy="309.700" r="4.200" fill="#1a73d4"/><path d="M237.500 311.300l3.100-3.100M238.200 308h2.500v2.500" stroke="#fff" stroke-width="1"/>
<!-- phone -->
<rect x="231.400" y="332.300" width="7.400" height="13.300" rx="1.700" stroke="#555" stroke-width="1.100"/><path d="M234 343.200h2.200" stroke="#555" stroke-width="1"/>
<!-- share with -->
<path d="M234 366h-3a2.400 2.400 0 0 0-2.400 2.400v6.400a2.400 2.400 0 0 0 2.400 2.400h7.400a2.400 2.400 0 0 0 2.400-2.400v-.9" stroke="#555" stroke-width="1.150"/>
<path d="M237.800 364.700l5.200 4.100-5.200 4.100v-2.300c-3-.1-5 .9-6.400 3 .3-3.700 2.600-6.300 6.400-6.600z" stroke="#2b7fd0" stroke-width="1.100"/>
<!-- set as desktop bg -->
<rect x="227.800" y="397.900" width="14.600" height="10.800" rx="2.300" stroke="#444" stroke-width="1.100"/>
<path d="M228.100 406h14" stroke="#444" stroke-width="1"/>
<rect x="227.100" y="395.400" width="8.800" height="8.800" rx="1.500" fill="#1a73d4"/>
<path d="M227.900 403.200l3.600-3.300 3.600 3.300" stroke="#fff" stroke-width="1"/><circle cx="233.800" cy="397.600" r=".7" fill="#fff"/>
<!-- star -->
<path d="M234.800 428l2.150 4.500 4.900.65-3.600 3.400.9 4.900-4.350-2.400-4.350 2.400.9-4.900-3.600-3.400 4.900-.65z" stroke="#2b7fd0" stroke-width="1.150"/>
<!-- compress -->
<path d="M236.500 462.300h4a1.900 1.900 0 0 1 1.900 1.900v7.700a1.900 1.900 0 0 1-1.900 1.900h-11a1.900 1.900 0 0 1-1.900-1.900v-9.700a1.900 1.900 0 0 1 1.900-1.900h3l1.600 2h2.400M227.800 464.300h6" stroke="#444" stroke-width="1.100"/>
<path d="M238.600 462.500v11" stroke="#2b7fd0" stroke-width="1.300" stroke-dasharray="1.500 1.300" stroke-linecap="butt"/>
<!-- copy as path -->
<rect x="227.700" y="493.200" width="14.800" height="11.800" rx="2.300" stroke="#444" stroke-width="1.100"/>
<path d="M230.600 496.200l1.700 5.800M233.300 496.200l1.700 5.800" stroke="#2b7fd0" stroke-width="1.050"/><circle cx="237.300" cy="501.700" r=".6" fill="#2b7fd0"/><circle cx="239.500" cy="501.700" r=".6" fill="#2b7fd0"/>
<!-- wrench -->
<path d="M240.900 524.800a4.300 4.300 0 0 0-5.800 5.200l-6.600 6.200a1.700 1.700 0 0 0 2.400 2.500l6.500-6.400a4.300 4.300 0 0 0 5.400-5.600l-2.800 2.700-2.100-.5-.5-2.100z" stroke="#555" stroke-width="1.100"/>
<!-- notepad -->
<rect x="229.200" y="564.700" width="11.600" height="14.600" rx=".8" fill="#3eb6e6"/><rect x="229.200" y="578.300" width="11.600" height="1.300" fill="#b7651f"/>
<path d="M231 568.400h8M231 571h8M231 573.600h8M231 576.200h8" stroke="#1678ad" stroke-width="1.100" stroke-linecap="butt"/>
<path d="M231.200 563.800v1.600M233.700 563.800v1.600M236.200 563.800v1.600M238.700 563.800v1.600" stroke="#1f88bd" stroke-width="1.100"/>
<!-- paint -->
<path d="M235.400 597c4.300 0 7 2.700 7 6 0 2.200-1.600 3.300-3 3.100-1.200-.2-2 .4-1.800 1.700.4 2.300-.9 4.100-3.200 4.100-4.200 0-7.200-3.300-7.200-7.400 0-4.200 3.600-7.500 8.200-7.500z" fill="#4cb5ea"/>
<circle cx="231" cy="604.300" r="1.100" fill="#2a7a3f"/><circle cx="232.600" cy="600.800" r="1.100" fill="#f2c12e"/><circle cx="236.200" cy="599.600" r="1.100" fill="#e0544a"/><circle cx="234.200" cy="607.600" r="1.100" fill="#fff"/>
<path d="M240 601.600l.4 5.200" stroke="#dfe6ee" stroke-width="1.700"/><path d="M240.400 606.600l.3 5" stroke="#a4601f" stroke-width="1.900"/>
<!-- photos -->
<g transform="translate(0 361)"><rect x="228.200" y="268.200" width="14" height="13.900" rx="2" fill="url(#gPh)"/><path d="M228.200 279.600l4.600-4.700 2.400 2.400 2.300-2.300 4.700 4.700v.4a2 2 0 0 1-2 2h-10a2 2 0 0 1-2-2z" fill="#46b1f4"/><path d="M228.200 278.200l4.600-4.600 4 4.100" stroke="#6fd0fb" stroke-width="1.600" stroke-linejoin="miter"/><circle cx="238.700" cy="271.700" r="1.050" fill="#e8f3ff"/></g>
<!-- show more -->
<path d="M234.800 670.900h-4.200a2.300 2.300 0 0 0-2.300 2.300v8.200a2.300 2.300 0 0 0 2.300 2.300h8.200a2.300 2.300 0 0 0 2.300-2.300v-4.200M228.300 677.200h4.100a2.300 2.300 0 0 1 2.300 2.300v4.100" stroke="#444" stroke-width="1.100"/>
<path d="M236 676.300l5.400-5.400M237.700 670.700h3.800v3.800" stroke="#2b7fd0" stroke-width="1.100"/>
<!-- submenu chevrons -->
<g stroke="#666" stroke-width="1.150"><path d="M518 303l4.200 4.300-4.200 4.300"/><path d="M518 367l4.200 4.300-4.200 4.300"/><path d="M518 463l4.200 4.300-4.200 4.300"/><path d="M518 632l4.200 4.300-4.200 4.300"/></g>
</svg>

<!-- orange box 2 -->
<div class="obox" style="left:214px;top:380.5px;width:230.2px;height:43.5px"></div>

<div id="leftedge" class="abs"></div><div id="leftedge2" class="abs"></div>
</div>
</body>
</html>
